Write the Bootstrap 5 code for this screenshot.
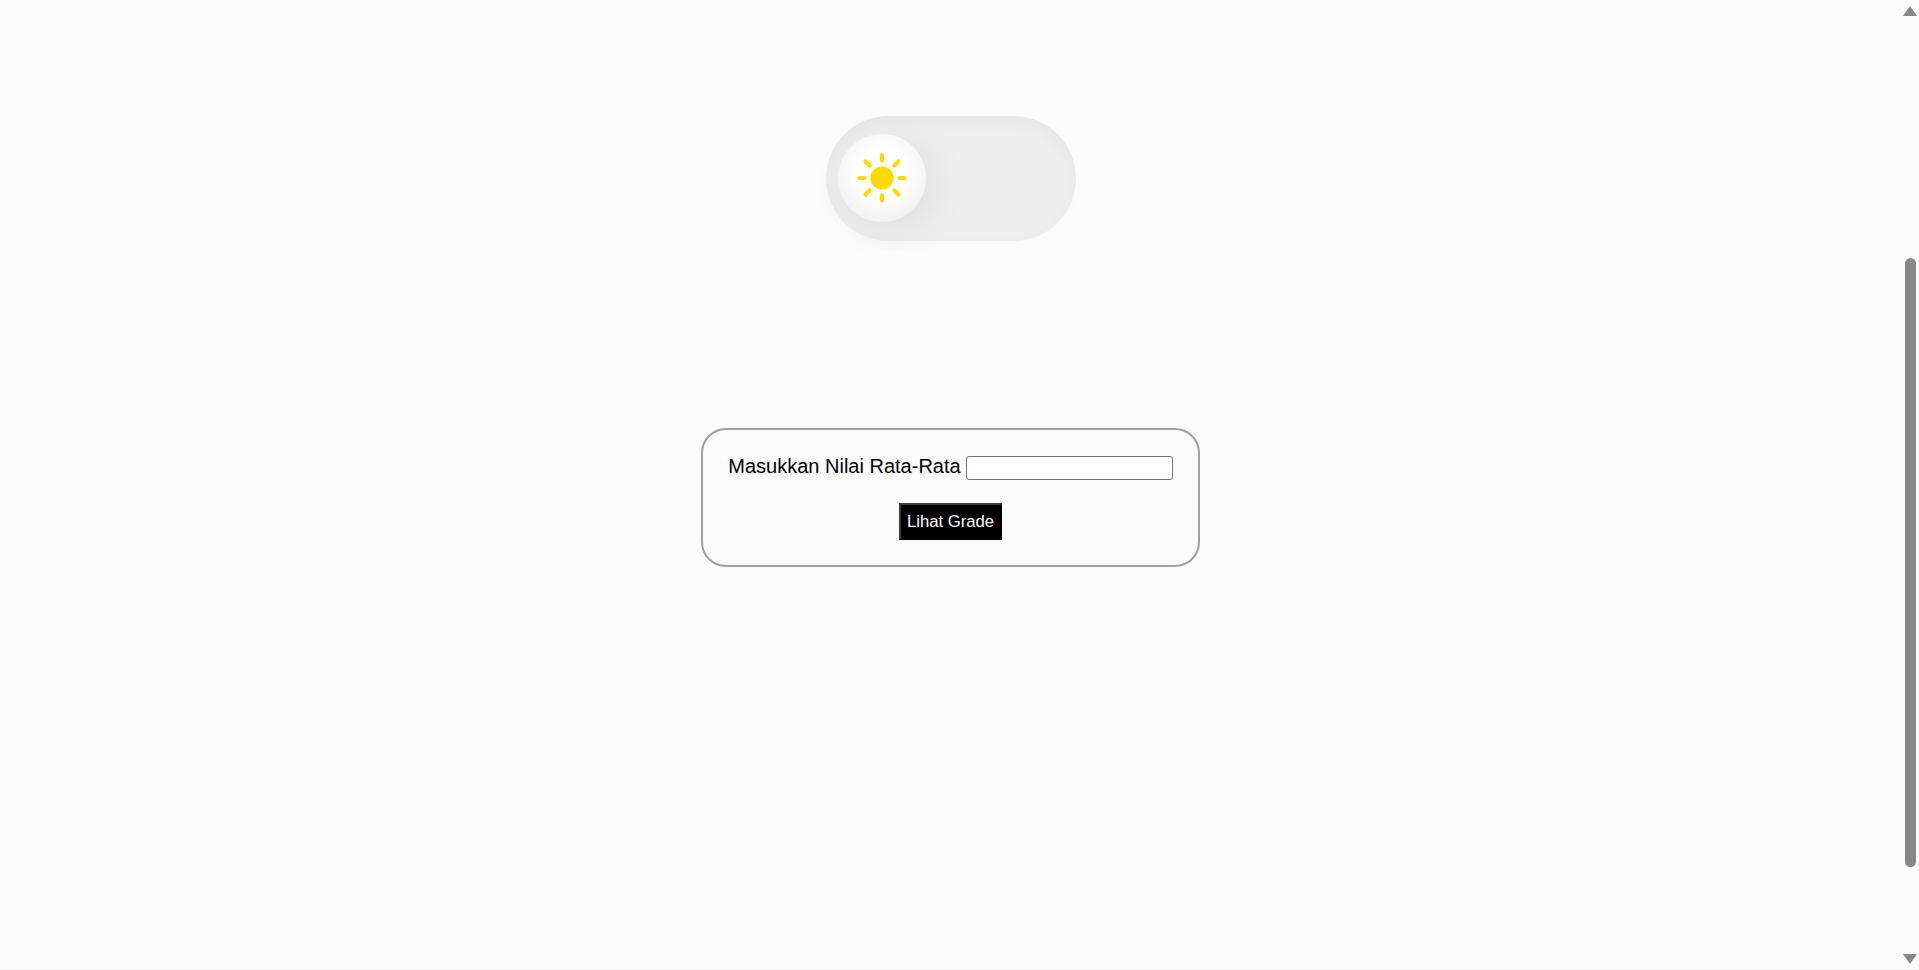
<!DOCTYPE html>
<html lang="id">
<head>
<meta charset="utf-8">
<title>Lihat Grade</title>
<link href="https://cdn.jsdelivr.net/npm/bootstrap@5.3.0/dist/css/bootstrap.min.css" rel="stylesheet">
<style>
html, body { height: 970px; overflow: hidden; }
body { background: #fbfbfb; color: #000; font-family: "Liberation Sans", Arial, sans-serif; }
.page-shell { height: 970px; border-bottom: 1px solid #f1f1f1; }
.page-main { width: 1902px; padding-top: 116px; }
.toggle-track {
  width: 250px; height: 125px; border-radius: 62.5px; padding: 18px 12px;
  background: #eeeeee;
  box-shadow: inset 0 6px 16px rgba(0,0,0,.035), 0 6px 16px rgba(0,0,0,.012);
}
.toggle-knob {
  width: 88px; height: 88px; border-radius: 50%;
  background: radial-gradient(circle 50px at 50% 42%, #ffffff 45%, #f2f2f2 100%);
  box-shadow: 8px 8px 40px rgba(0,0,0,.07);
}
.sun-icon { width: 52px; height: 52px; }
.grade-form {
  width: 499px; height: 139px; margin-top: 187px; margin-right: 1px; padding: 26px 25px 0 25px;
  border: 2px solid #a09e9e; border-radius: 25px; background: #fbfbfb;
}
.grade-label { font-size: 20px; line-height: 24px; margin: -4px 5px 0 0; }
.grade-input {
  width: 207px; height: 24px; padding: 1px 2px; background: #fff;
  border: 1px solid #767676; border-radius: 3px;
}
.grade-button {
  width: 103px; height: 37px; margin-top: 23px; padding: 0;
  background: #000; color: #fff; font-size: 16.7px;
  border: 2px solid; border-color: #3b3b3b #000 #000 #3b3b3b;
}
.scroll-rail { width: 17px; padding: 6px 2px 6px 2px; height: 970px; }
.arrow-up { width: 0; height: 0; border: 7px solid transparent; border-top: 0; border-bottom: 10px solid #878787; margin-left: -1px; }
.arrow-down { width: 0; height: 0; border: 7px solid transparent; border-bottom: 0; border-top: 10px solid #878787; margin-left: -1px; }
.scroll-thumb { width: 11px; height: 610px; margin-top: 242px; margin-bottom: 87px; border-radius: 6px; background: #878787; }
</style>
</head>
<body>
<div class="page-shell d-flex">
  <main class="page-main d-flex flex-column align-items-center">
    <div class="toggle-track flex-shrink-0">
      <div class="toggle-knob d-flex align-items-center justify-content-center">
        <svg class="sun-icon" viewBox="0 0 52 52" aria-hidden="true">
          <circle cx="26" cy="26" r="11.6" fill="#ffd800"/>
          <g stroke="#ffd800" stroke-width="4.2" stroke-linecap="round">
            <line x1="26" y1="3.4" x2="26" y2="8.6"/>
            <line x1="26" y1="43.4" x2="26" y2="48.6"/>
            <line x1="3.4" y1="26" x2="8.6" y2="26"/>
            <line x1="43.4" y1="26" x2="48.6" y2="26"/>
            <line x1="9.6" y1="9.6" x2="13.6" y2="13.6"/>
            <line x1="38.4" y1="13.6" x2="42.4" y2="9.6"/>
            <line x1="9.6" y1="42.4" x2="13.6" y2="38.4"/>
            <line x1="38.4" y1="38.4" x2="42.4" y2="42.4"/>
          </g>
        </svg>
      </div>
    </div>
    <form class="grade-form d-flex flex-column align-items-center flex-shrink-0" onsubmit="return false">
      <div class="d-flex align-items-center">
        <label class="grade-label" for="nilai">Masukkan Nilai Rata-Rata</label>
        <input class="grade-input" id="nilai" type="text">
      </div>
      <button class="grade-button" type="submit">Lihat Grade</button>
    </form>
  </main>
  <div class="scroll-rail d-flex flex-column align-items-center" aria-hidden="true">
    <div class="arrow-up"></div>
    <div class="scroll-thumb"></div>
    <div class="arrow-down"></div>
  </div>
</div>
</body>
</html>
